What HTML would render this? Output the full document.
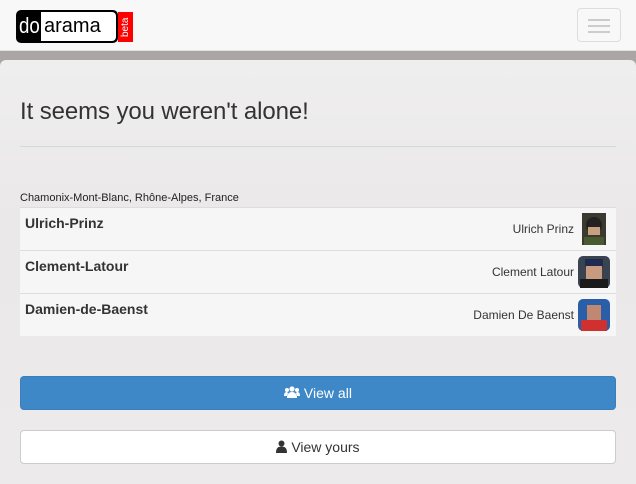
<!DOCTYPE html>
<html><head><meta charset="utf-8"><style>
*{box-sizing:border-box;margin:0;padding:0}
html,body{width:636px;height:484px;overflow:hidden}
body{background:#aaa6a5;font-family:"Liberation Sans",sans-serif;color:#333;position:relative}
.nav{position:absolute;left:0;top:0;width:636px;height:51px;background:#f8f8f8;border-bottom:1px solid #e0e0e0}
.logo{position:absolute;left:16px;top:10px;height:33px;width:102px;background:#000;border-radius:5px}
.logo .do{position:absolute;left:3px;top:3px;color:#fff;font-size:22px;transform:scaleX(0.85);transform-origin:left}
.logo .ar{position:absolute;left:25px;top:2px;width:75px;height:29px;background:#fff;border-radius:0 4px 4px 0;font-size:20px;color:#000;padding-left:3px;line-height:28px}
.beta{position:absolute;left:118px;top:12px;width:15px;height:30px;background:#f00;color:#fff;font-size:10px;writing-mode:vertical-rl;transform:rotate(180deg);text-align:center;line-height:15px}
.tog{position:absolute;left:577px;top:8px;width:44px;height:34px;border:1px solid #ddd;border-radius:4px}
.tog i{position:absolute;left:10px;width:22px;height:2px;background:#ccc}
.panel{position:absolute;left:0;top:60px;width:636px;height:424px;background:linear-gradient(#efeeee,#eae8e8 40%,#eceaea);border-radius:6px 6px 0 0}
h1{position:absolute;left:20px;top:98px;font-size:24px;font-weight:normal;color:#333;letter-spacing:-0.1px}
hr{position:absolute;left:20px;top:146px;width:596px;border:0;border-top:1px solid #d8d8d8}
.loc{position:absolute;left:20px;top:192px;font-size:11px;color:#222}
.row{position:absolute;left:20px;width:596px;height:43px;background:#f6f6f6;border-top:1px solid #ddd}
.row b{position:absolute;left:5px;top:7px;font-size:14px}
.row span{position:absolute;right:42px;top:14px;font-size:12px}
.row svg{position:absolute;right:6px;top:5px}
.btn{position:absolute;left:20px;width:596px;height:34px;border-radius:4px;text-align:center;font-size:14px;line-height:32px}
.b1{top:376px;background:#3f88c8;color:#fff;border:1px solid #3a7fbc}
.b2{top:430px;background:#fff;border:1px solid #ccc;color:#333}
</style></head><body>
<div class="nav">
<div class="logo"><span class="do">do</span><span class="ar">arama</span></div>
<div class="beta">beta</div>
<div class="tog"><i style="top:10px"></i><i style="top:16px"></i><i style="top:22px"></i></div>
</div>
<div class="panel"></div>
<h1>It seems you weren't alone!</h1>
<hr>
<div class="loc">Chamonix-Mont-Blanc, Rhône-Alpes, France</div>
<div class="row" style="top:207px"><b>Ulrich-Prinz</b><span>Ulrich Prinz</span><svg width="24" height="32" style="right:10px"><rect width="24" height="32" fill="#3a3a30"/><circle cx="12" cy="12" r="8" fill="#222"/><rect x="6" y="14" width="12" height="8" fill="#c8a080"/><rect x="2" y="24" width="20" height="8" fill="#4a5a30"/></svg></div>
<div class="row" style="top:250px"><b>Clement-Latour</b><span>Clement Latour</span><svg width="32" height="32"><rect width="32" height="32" rx="5" fill="#3a4450"/><rect x="7" y="3" width="18" height="8" fill="#1e2a50"/><rect x="8" y="10" width="16" height="13" fill="#c89a80"/><rect x="2" y="23" width="28" height="9" fill="#1a1a1a"/></svg></div>
<div class="row" style="top:293px"><b>Damien-de-Baenst</b><span>Damien De Baenst</span><svg width="32" height="32"><rect width="32" height="32" rx="5" fill="#2b5ea8"/><rect x="9" y="6" width="14" height="15" fill="#c08870"/><rect x="3" y="21" width="26" height="11" fill="#d03030"/></svg></div>
<div class="btn b1"><svg width="16" height="13" viewBox="0 0 16 13" style="vertical-align:-1px" fill="#fff"><circle cx="8" cy="3" r="2.6"/><circle cx="3" cy="4" r="2"/><circle cx="13" cy="4" r="2"/><path d="M3 12c0-4 2-6 5-6s5 2 5 6z"/><path d="M0 10c0-3 1-4 3-4l1 1-1 3z M16 10c0-3-1-4-3-4l-1 1 1 3z"/></svg> View all</div>
<div class="btn b2"><svg width="11" height="13" viewBox="0 0 11 13" style="vertical-align:-1px" fill="#333"><circle cx="5.5" cy="3.5" r="3"/><path d="M0 13c0-5 2-6.5 5.5-6.5S11 8 11 13z"/></svg> View yours</div>
</body></html>
